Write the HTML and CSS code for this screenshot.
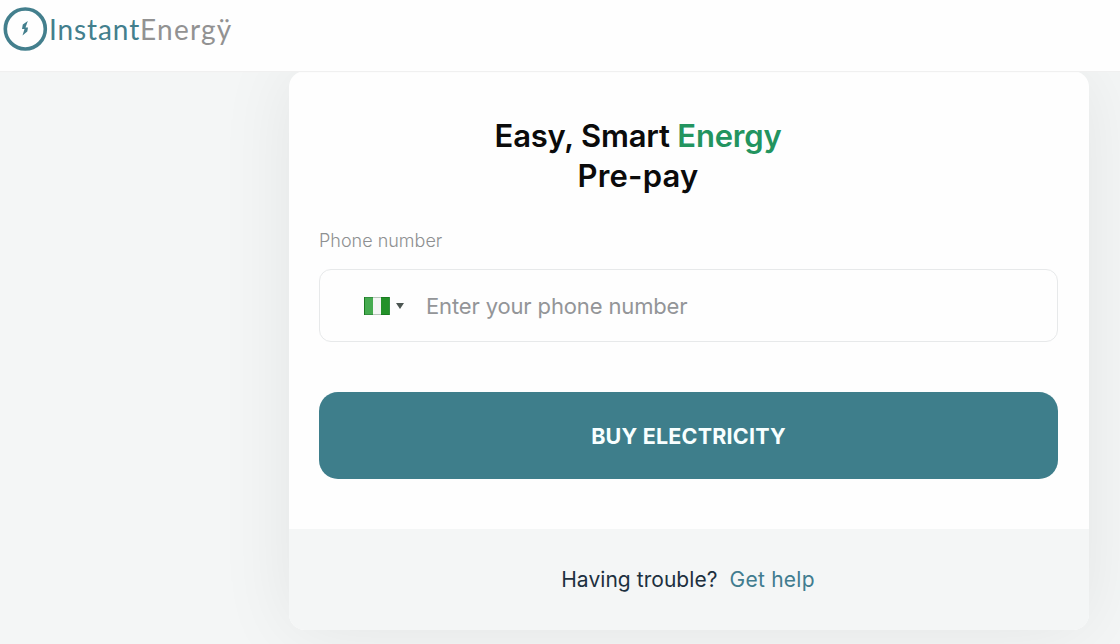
FILE: index.html
```
<!DOCTYPE html>
<html lang="en">
<head>
  <meta charset="UTF-8">
  <meta name="viewport" content="width=device-width, initial-scale=1.0">
  <title>Instant Energy</title>
  <link rel="stylesheet" href="styles.css">
</head>
<body>
  <header class="navbar">
    <svg class="logo-icon" width="46" height="46" viewBox="0 0 46 46">
      <circle cx="23.3" cy="23" r="20" fill="none" stroke="#437f8d" stroke-width="3.6"/>
      <path d="M25.8 15L20.8 18.5L20 23H22.5L20.5 29.5L25.3 25.5L26 21.5H23.5Z" fill="#437f8d"/>
    </svg>
    <div class="logo-text"><span class="instant">Instant</span><span class="energy">Energÿ</span></div>
  </header>
  <main class="page">
    <div class="card">
      <form class="card-body">
        <h1 class="title"><span class="line-one">Easy, Smart <span class="green">Energy</span></span><br><span class="line-two">Pre-pay</span></h1>
        <label class="label" for="phone">Phone number</label>
        <div class="phone-box">
          <div class="country">
            <span class="flag"></span>
            <span class="arrow"></span>
          </div>
          <input class="phone-input" id="phone" type="tel" placeholder="Enter your phone number">
        </div>
        <button class="buy-btn" type="button">BUY ELECTRICITY</button>
      </form>
      <div class="card-footer">
        <span class="trouble">Having trouble?</span>
        <a class="help" href="#">Get help</a>
      </div>
    </div>
  </main>
</body>
</html>
```
FILE: styles.css
```
* {
  margin: 0;
  padding: 0;
  box-sizing: border-box;
}
body {
  height: 644px;
  overflow: hidden;
  background-color: #f4f6f6;
  font-family: Inter, "Liberation Sans", sans-serif;
}
.navbar {
  height: 71px;
  padding: 6px 0 0 2px;
  display: flex;
  align-items: flex-start;
  background-color: #fefefe;
  position: relative;
  z-index: 1;
  box-shadow: 0 1px 1px #f0f0f0;
}
.logo-text {
  margin-left: 1px;
  font-family: Lato, sans-serif;
  font-size: 28px;
  line-height: 46px;
  white-space: nowrap;
}
.instant {
  color: #437f8d;
  letter-spacing: 0.9px;
}
.energy {
  color: #929292;
  letter-spacing: 1.2px;
}
.page {
  padding-left: 289px;
}
.card {
  width: 800px;
  height: 559px;
  border-radius: 16px;
  background-color: #fefefe;
  box-shadow: 0 0 75px rgba(0, 0, 0, 0.075);
  overflow: hidden;
}
.card-body {
  height: 458px;
  padding: 45px 31px 0 30px;
}
.title {
  width: 638px;
  font-size: 31px;
  line-height: 40px;
  font-weight: 600;
  text-align: center;
  color: #0b0b0b;
}
.line-one {
  letter-spacing: -0.2px;
}
.line-two {
  letter-spacing: 0.2px;
}
.green {
  color: #23945f;
}
.label {
  display: block;
  margin-top: 33px;
  font-size: 18px;
  line-height: 24px;
  font-weight: 300;
  color: #8e9091;
}
.phone-box {
  height: 73px;
  margin-top: 16px;
  padding-left: 44px;
  display: flex;
  align-items: center;
  border: 1px solid #e7e9ea;
  border-radius: 12px;
}
.country {
  width: 62px;
  display: flex;
  align-items: center;
  gap: 6px;
}
.flag {
  width: 26px;
  height: 18px;
  border: 1px solid rgba(0, 60, 10, 0.25);
  background: linear-gradient(90deg, #46ab50 0 33%, #f5f5f5 33% 67%, #239129 67%);
}
.arrow {
  border-left: 4px solid transparent;
  border-right: 4px solid transparent;
  border-top: 6px solid #4c5652;
}
.phone-input {
  width: 560px;
  border: none;
  outline: none;
  background: transparent;
  font-family: inherit;
  font-size: 22px;
  letter-spacing: -0.14px;
}
.phone-input::placeholder {
  color: #939598;
}
.buy-btn {
  display: block;
  width: 100%;
  height: 87px;
  margin-top: 50px;
  border: none;
  border-radius: 19px;
  background-color: #3e7e8b;
  color: #f8ffff;
  font-family: inherit;
  font-size: 21.5px;
  font-weight: 700;
  letter-spacing: 0.2px;
}
.card-footer {
  height: 101px;
  padding-right: 2px;
  display: flex;
  align-items: center;
  justify-content: center;
  gap: 12px;
  background-color: #f4f6f6;
  font-size: 21px;
}
.trouble {
  color: #1d303f;
  letter-spacing: 0.05px;
}
.help {
  color: #417c8f;
  text-decoration: none;
  letter-spacing: 0.25px;
}
```
